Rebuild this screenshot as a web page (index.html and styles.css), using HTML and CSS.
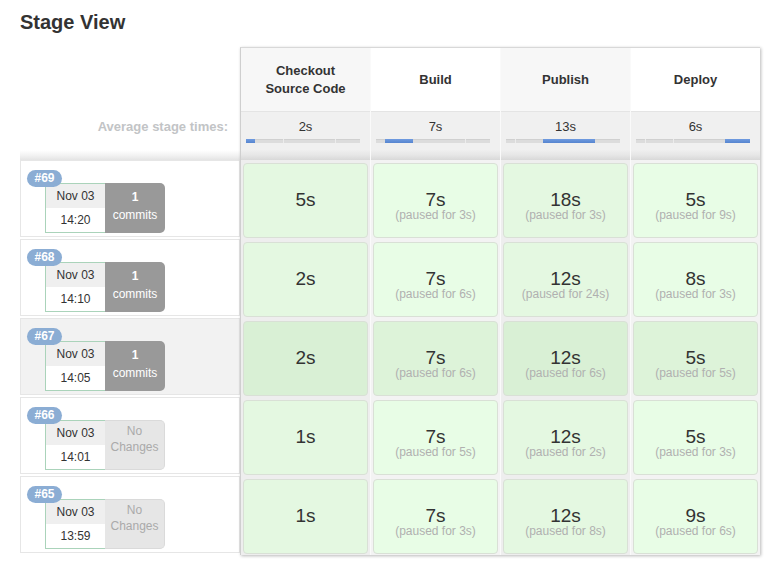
FILE: index.html
```html
<!DOCTYPE html>
<html>
<head>
<meta charset="utf-8">
<link rel="stylesheet" href="styles.css">
</head>
<body>
<div class="page">
  <h1 class="title">Stage View</h1>
  <div class="table">
    <div class="left">
      <div class="left-head"></div>
      <div class="left-avg">Average stage times:</div>
      <div class="run">
        <span class="badge">#69</span>
        <div class="info">
          <div class="date"><div class="d1">Nov 03</div><div class="d2">14:20</div></div>
          <div class="changes"><b>1</b><span>commits</span></div>
        </div>
      </div>
      <div class="run">
        <span class="badge">#68</span>
        <div class="info">
          <div class="date"><div class="d1">Nov 03</div><div class="d2">14:10</div></div>
          <div class="changes"><b>1</b><span>commits</span></div>
        </div>
      </div>
      <div class="run hl">
        <span class="badge">#67</span>
        <div class="info">
          <div class="date"><div class="d1">Nov 03</div><div class="d2">14:05</div></div>
          <div class="changes"><b>1</b><span>commits</span></div>
        </div>
      </div>
      <div class="run">
        <span class="badge">#66</span>
        <div class="info">
          <div class="date"><div class="d1">Nov 03</div><div class="d2">14:01</div></div>
          <div class="changes none"><span>No</span><span>Changes</span></div>
        </div>
      </div>
      <div class="run">
        <span class="badge">#65</span>
        <div class="info">
          <div class="date"><div class="d1">Nov 03</div><div class="d2">13:59</div></div>
          <div class="changes none"><span>No</span><span>Changes</span></div>
        </div>
      </div>
    </div>

    <div class="stages">
      <div class="col odd">
        <div class="head">Checkout<br>Source Code</div>
        <div class="avg"><div class="avg-t">2s</div>
          <div class="bar"><i class="on" style="width:9px"></i><i style="width:28px"></i><i style="width:52px"></i><i style="width:25px"></i></div></div>
        <div class="body">
          <div class="cell"><div class="dur">5s</div></div>
          <div class="cell"><div class="dur">2s</div></div>
          <div class="cell hl"><div class="dur">2s</div></div>
          <div class="cell"><div class="dur">1s</div></div>
          <div class="cell"><div class="dur">1s</div></div>
        </div>
      </div>
      <div class="col even">
        <div class="head">Build</div>
        <div class="avg"><div class="avg-t">7s</div>
          <div class="bar"><i style="width:9px"></i><i class="on" style="width:28px"></i><i style="width:52px"></i><i style="width:25px"></i></div></div>
        <div class="body">
          <div class="cell"><div class="dur">7s</div><div class="paused">(paused for 3s)</div></div>
          <div class="cell"><div class="dur">7s</div><div class="paused">(paused for 6s)</div></div>
          <div class="cell hl"><div class="dur">7s</div><div class="paused">(paused for 6s)</div></div>
          <div class="cell"><div class="dur">7s</div><div class="paused">(paused for 5s)</div></div>
          <div class="cell"><div class="dur">7s</div><div class="paused">(paused for 3s)</div></div>
        </div>
      </div>
      <div class="col odd">
        <div class="head">Publish</div>
        <div class="avg"><div class="avg-t">13s</div>
          <div class="bar"><i style="width:9px"></i><i style="width:28px"></i><i class="on" style="width:52px"></i><i style="width:25px"></i></div></div>
        <div class="body">
          <div class="cell"><div class="dur">18s</div><div class="paused">(paused for 3s)</div></div>
          <div class="cell"><div class="dur">12s</div><div class="paused">(paused for 24s)</div></div>
          <div class="cell hl"><div class="dur">12s</div><div class="paused">(paused for 6s)</div></div>
          <div class="cell"><div class="dur">12s</div><div class="paused">(paused for 2s)</div></div>
          <div class="cell"><div class="dur">12s</div><div class="paused">(paused for 8s)</div></div>
        </div>
      </div>
      <div class="col even">
        <div class="head">Deploy</div>
        <div class="avg"><div class="avg-t">6s</div>
          <div class="bar"><i style="width:9px"></i><i style="width:28px"></i><i style="width:52px"></i><i class="on" style="width:25px"></i></div></div>
        <div class="body">
          <div class="cell"><div class="dur">5s</div><div class="paused">(paused for 9s)</div></div>
          <div class="cell"><div class="dur">8s</div><div class="paused">(paused for 3s)</div></div>
          <div class="cell hl"><div class="dur">5s</div><div class="paused">(paused for 5s)</div></div>
          <div class="cell"><div class="dur">5s</div><div class="paused">(paused for 3s)</div></div>
          <div class="cell"><div class="dur">9s</div><div class="paused">(paused for 6s)</div></div>
        </div>
      </div>
    </div>
  </div>
</div>
</body>
</html>
```

FILE: styles.css
```css
* { box-sizing: border-box; }
html, body { margin: 0; padding: 0; background: #fff; }
body {
  font-family: "Liberation Sans", Arial, sans-serif;
  color: #333;
  width: 779px;
  height: 566px;
  overflow: hidden;
}
.page { padding: 0 20px; }
.title {
  margin: 10px 0 0 0;
  font-size: 20px;
  line-height: 24px;
  font-weight: bold;
  color: #333;
}
.table {
  display: flex;
  margin-top: 13px;
}
.left { width: 220px; flex: none; }
.left-head { height: 65px; }
.left-avg {
  height: 48px;
  padding: 7px 12px 0 0;
  text-align: right;
  font-size: 13px;
  line-height: 16px;
  font-weight: bold;
  color: #c2c4c6;
  background: linear-gradient(to bottom, #fff 0, #fff 80%, #f0f0f0 92%, #e4e4e4 100%);
}
.run {
  height: 77px;
  margin-bottom: 2px;
  border: 1px solid #e6e6e6;
  background: #fff;
  padding: 9px 0 0 6px;
  display: flex;
  flex-direction: column;
  align-items: flex-start;
}
.run.hl { background: #f2f2f2; }
.badge {
  position: relative;
  z-index: 1;
  width: 35px;
  height: 17px;
  margin-bottom: -4px;
  border-radius: 9px;
  background: #8badd4;
  color: #fff;
  font-size: 12px;
  font-weight: bold;
  line-height: 17px;
  text-align: center;
}
.info {
  display: flex;
  margin-left: 18px;
  height: 50px;
}
.date {
  width: 60px;
  border: 1px solid #aad3ba;
  border-right: none;
  display: flex;
  flex-direction: column;
  font-size: 12px;
  text-align: center;
  color: #333;
}
.d1 { height: 24px; line-height: 24px; background: #efefef; }
.d2 { flex: 1; line-height: 24px; background: #fff; }
.changes {
  width: 60px;
  border-radius: 0 5px 5px 0;
  background: #999;
  color: #fff;
  font-size: 12px;
  line-height: 18px;
  padding-top: 5px;
  display: flex;
  flex-direction: column;
  align-items: center;
}
.changes.none {
  background: #e6e6e6;
  border: 1px solid #dadada;
  border-left: none;
  color: #aaa;
  line-height: 16px;
  padding-top: 2px;
}

.stages {
  width: 520px;
  flex: none;
  display: flex;
  border-top: 1px solid #d8d8d8;
  border-left: 1px solid #cfcfcf;
  box-shadow: 1px 1px 3px rgba(0, 0, 0, 0.28);
  background: #f0f0f0;
}
.col {
  flex: 1;
  min-width: 0;
  display: flex;
  flex-direction: column;
}
.col + .col { border-left: 1px solid #fafafa; }
.head {
  height: 64px;
  border-bottom: 1px solid #e4e4e4;
  display: flex;
  align-items: center;
  justify-content: center;
  text-align: center;
  font-size: 13px;
  font-weight: bold;
  line-height: 18px;
  color: #333;
}
.odd .head { background: #f7f7f7; }
.even .head { background: #fff; }
.avg {
  height: 48px;
  padding-top: 7px;
  background: linear-gradient(to bottom, #f0f0f0 0, #f0f0f0 78%, #e6e6e6 90%, #d8d8d8 100%);
}
.avg-t {
  text-align: center;
  font-size: 13px;
  line-height: 16px;
  color: #333;
}
.bar {
  display: flex;
  width: 114px;
  height: 4px;
  margin: 4px 0 0 5px;
}
.bar i {
  display: block;
  height: 4px;
  background: #dcdcdc;
  box-shadow: inset 0 1px 0 #d0d0d0;
}
.bar i + i { border-left: 1px solid #ececec; }
.bar i.on {
  background: linear-gradient(to bottom, #6f9be0 0, #5685cf 100%);
  box-shadow: none;
}
.bar i.on + i, .bar i + i.on { border-left: none; }
.body {
  display: flex;
  flex-direction: column;
  gap: 4px;
  padding: 3px 2px 1px 2px;
}
.odd .body { background: #eeeeee; }
.even .body { background: #f3f3f3; }
.cell {
  height: 75px;
  border: 1px solid #d9e0d6;
  border-radius: 4px;
  padding-top: 27px;
  text-align: center;
}
.odd .cell { background: #e4f8e1; }
.even .cell { background: #e8fde6; }
.odd .cell.hl { background: #d9f0d5; }
.even .cell.hl { background: #ddf3d9; }
.dur {
  font-size: 19px;
  line-height: 18px;
  color: #333;
}
.paused {
  font-size: 12px;
  line-height: 12px;
  color: #b0b0b0;
}
```
